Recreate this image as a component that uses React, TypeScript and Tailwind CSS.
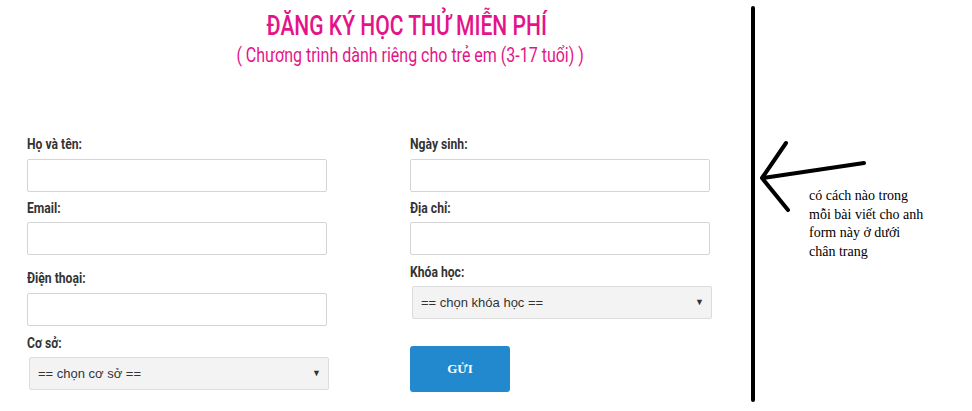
import React from "react";

const cond = "font-['Roboto','Liberation_Sans',sans-serif]";

function Label({ text, className = "" }: { text: string; className?: string }) {
  return (
    <div className={`h-5 leading-5 ${className}`}>
      <span
        className={`${cond} inline-block origin-left scale-x-[0.81] text-[15px] font-bold whitespace-nowrap text-[#333]`}
      >
        {text}
      </span>
    </div>
  );
}

function TextInput({ className = "" }: { className?: string }) {
  return (
    <input
      type="text"
      className={`block h-[33px] w-[300px] rounded-[2px] border border-[#d4d4d4] bg-white px-2 outline-none ${className}`}
    />
  );
}

function Select({ text, className = "" }: { text: string; className?: string }) {
  return (
    <div
      className={`relative flex h-[33px] w-[300px] items-center rounded-[2px] border border-[#dcdcdc] bg-[#f3f3f3] pl-[8px] font-['Liberation_Sans',Arial,sans-serif] text-[13px] text-[#333] ${className}`}
    >
      {text}
      <span className="absolute right-[7px] top-[9px] text-[9px] text-[#333]">▼</span>
    </div>
  );
}

export default function App() {
  return (
    <div className="relative flex h-[411px] w-[972px] overflow-hidden bg-white">
      <div className="w-[751px] shrink-0">
        <div className="pl-[62px] pt-[9px] text-center">
          <h1 className={`${cond} h-[34px] text-[27px] leading-[34px] font-medium text-[#e5138a]`}>
            <span className="inline-block scale-x-[0.78] whitespace-nowrap">ĐĂNG KÝ HỌC THỬ MIỄN PHÍ</span>
          </h1>
          <p className={`${cond} pl-[7px] text-[20px] leading-[24px] text-[#e5138a]`}>
            <span className="inline-block scale-x-[0.8] whitespace-nowrap">
              ( Chương trình dành riêng cho trẻ em (3-17 tuổi) )
            </span>
          </p>
        </div>

        <div className="mt-[66px] flex gap-[83px] pl-[27px]">
          <div className="flex w-[300px] flex-col">
            <Label text="Họ và tên:" />
            <TextInput className="mt-[6px]" />
            <Label text="Email:" className="mt-[5px]" />
            <TextInput className="mt-[5px]" />
            <Label text="Điện thoại:" className="mt-[12px]" />
            <TextInput className="mt-[6px]" />
            <Label text="Cơ sở:" className="mt-[6px]" />
            <Select text="== chọn cơ sở ==" className="ml-[2px] mt-[5px]" />
          </div>
          <div className="flex w-[302px] flex-col">
            <Label text="Ngày sinh:" />
            <TextInput className="mt-[6px]" />
            <Label text="Địa chỉ:" className="mt-[5px]" />
            <TextInput className="mt-[5px]" />
            <Label text="Khóa học:" className="mt-[6px]" />
            <Select text="== chọn khóa học ==" className="ml-[2px] mt-[5px]" />
            <button className="mt-[27px] h-[46px] w-[100px] rounded-[3px] bg-[#2389cf] font-['Liberation_Serif',serif] text-[13px] font-bold text-white">
              GỬI
            </button>
          </div>
        </div>
      </div>

      <div className="mt-[6px] h-[396px] w-[4px] shrink-0 rounded-full bg-black" />

      <div className="relative flex-1">
        <svg
          className="absolute left-0 top-[135px]"
          width="120"
          height="85"
          viewBox="756 135 120 85"
          fill="none"
          stroke="black"
          strokeWidth="4"
          strokeLinecap="round"
          strokeLinejoin="round"
        >
          <path d="M865 163 L764 178" />
          <path d="M787 143 L763 178 L789 210" />
        </svg>
        <p className="ml-[54px] mt-[187px] font-['Liberation_Serif','Times_New_Roman',serif] text-[14px] leading-[18.5px] text-black">
          có cách nào trong
          <br />
          mỗi bài viết cho anh
          <br />
          form này ở dưới
          <br />
          chân trang
        </p>
      </div>
    </div>
  );
}
